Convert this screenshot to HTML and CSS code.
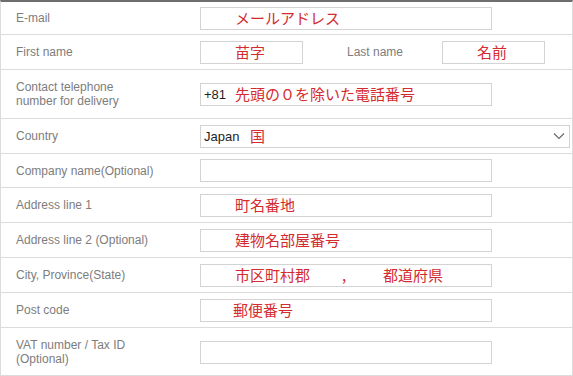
FILE: index.html
```html
<!DOCTYPE html>
<html lang="ja">
<head>
    <meta charset="UTF-8">
    <meta name="viewport" content="width=device-width, initial-scale=1.0">
    <title>Shipping address</title>
    <link rel="stylesheet" href="styles.css">
</head>
<body>
    <div class="address-form">
        <div class="row row-first">
            <div class="label">E-mail</div>
            <div class="field"><div class="box wide"><span class="hint">メールアドレス</span></div></div>
        </div>

        <div class="row">
            <div class="label">First name</div>
            <div class="field">
                <div class="box short"><span class="hint">苗字</span></div>
                <div class="label inline-label">Last name</div>
                <div class="box short"><span class="hint">名前</span></div>
            </div>
        </div>

        <div class="row tall">
            <div class="label">Contact telephone<br>number for delivery</div>
            <div class="field">
                <div class="box wide box-tight">
                    <span class="prefix">+81</span>
                    <span class="hint">先頭の０を除いた電話番号</span>
                </div>
            </div>
        </div>

        <div class="row">
            <div class="label">Country</div>
            <div class="field">
                <div class="box select">
                    <span class="value">Japan</span>
                    <span class="hint">国</span>
                    <svg class="chevron" width="12" height="8" viewBox="0 0 12 8">
                        <path d="M1 1.5 L6 6.5 L11 1.5" fill="none" stroke="#666" stroke-width="1.1"/>
                    </svg>
                </div>
            </div>
        </div>

        <div class="row row-short">
            <div class="label">Company name(Optional)</div>
            <div class="field"><div class="box wide"></div></div>
        </div>

        <div class="row">
            <div class="label">Address line 1</div>
            <div class="field"><div class="box wide"><span class="hint">町名番地</span></div></div>
        </div>

        <div class="row">
            <div class="label">Address line 2 (Optional)</div>
            <div class="field"><div class="box wide"><span class="hint">建物名部屋番号</span></div></div>
        </div>

        <div class="row">
            <div class="label">City, Province(State)</div>
            <div class="field">
                <div class="box wide">
                    <span class="hint city">市区町村郡</span>
                    <span class="hint comma">,</span>
                    <span class="hint">都道府県</span>
                </div>
            </div>
        </div>

        <div class="row">
            <div class="label">Post code</div>
            <div class="field"><div class="box wide box-postcode"><span class="hint">郵便番号</span></div></div>
        </div>

        <div class="row tall">
            <div class="label">VAT number / Tax ID<br>(Optional)</div>
            <div class="field"><div class="box wide box-low"></div></div>
        </div>
    </div>
</body>
</html>
```

FILE: styles.css
```css
body {
    margin: 0;
    background-color: #fff;
    font-family: "Liberation Sans", Arial, sans-serif;
}
.address-form {
    width: 573px;
    box-sizing: border-box;
    border-top: 2px solid #6e6e6e;
    border-left: 1px solid #dcdcdc;
    border-right: 1px solid #dcdcdc;
}
.row {
    display: grid;
    grid-template-columns: 199px 1fr;
    align-items: center;
    height: 35px;
    box-sizing: border-box;
    border-bottom: 1px solid #dcdcdc;
}
.row-first {
    height: 33px;
}
.row-short {
    height: 34px;
}
.row.tall {
    height: 49px;
}
.row.tall:last-child {
    height: 48px;
}
.label {
    padding-left: 15px;
    font-size: 12px;
    line-height: 14px;
    color: #7d7d7d;
}
.field {
    display: flex;
    align-items: center;
}
.box {
    display: flex;
    align-items: center;
    height: 23px;
    box-sizing: border-box;
    border: 1px solid #d3d3d3;
    background-color: #fff;
    padding-left: 34px;
}
.wide {
    width: 292px;
}
.short {
    width: 103px;
}
.inline-label {
    padding-left: 44px;
    box-sizing: border-box;
    width: 139px;
}
.box-tight {
    padding-left: 3px;
}
.box-postcode {
    padding-left: 32px;
}
.box-low {
    margin-top: 2px;
}
.hint {
    font-family: "Noto Sans CJK JP", "Liberation Sans", sans-serif;
    font-size: 15px;
    line-height: 18px;
    color: #d42b2f;
}
.prefix,
.value {
    font-size: 13px;
    color: #1e1e1e;
}
.prefix {
    width: 31px;
}
.select {
    width: 370px;
    padding-left: 3px;
    padding-right: 4px;
}
.select .value {
    width: 46px;
}
.chevron {
    margin-left: auto;
}
.city {
    width: 107px;
}
.comma {
    width: 41px;
}
```
